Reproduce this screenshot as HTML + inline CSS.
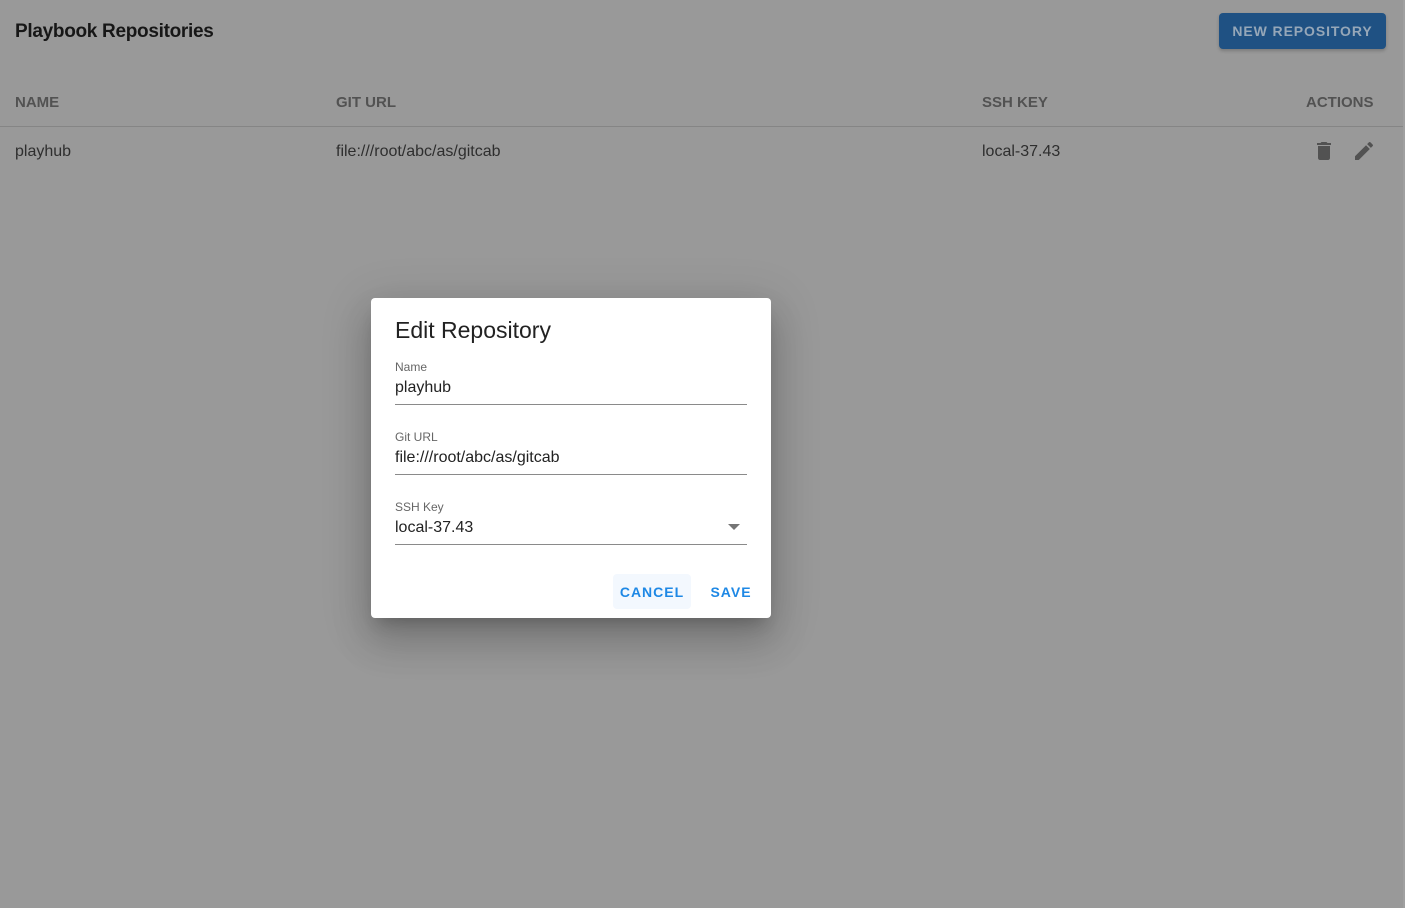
<!DOCTYPE html>
<html><head><meta charset="utf-8"><style>
*{box-sizing:border-box;margin:0;padding:0}
body{width:1405px;height:908px;background:#999;font-family:"Liberation Sans",Roboto,sans-serif;position:relative;overflow:hidden}
.strip{position:absolute;right:0;top:0;width:2px;height:908px;background:#a0a0a0}
h1{position:absolute;left:15px;top:21px;font-size:19px;font-weight:bold;color:#171717;letter-spacing:-0.3px}
.btn{position:absolute;left:1219px;top:13px;width:167px;height:36px;background:#1f5183;border-radius:4px;color:#96a7b8;font-size:14px;font-weight:bold;letter-spacing:0.9px;display:flex;align-items:center;justify-content:center;box-shadow:0 2px 3px rgba(0,0,0,.2)}
.th{position:absolute;top:94px;font-size:15px;font-weight:bold;color:#525252}
.td{position:absolute;top:143px;font-size:16px;color:#2e2e2e}
.line{position:absolute;left:0;top:126px;width:1403px;height:1px;background:#858585}
.dlg{position:absolute;left:371px;top:298px;width:400px;height:320px;background:#fff;border-radius:4px;box-shadow:0 11px 15px -7px rgba(0,0,0,.2),0 24px 38px 3px rgba(0,0,0,.14),0 9px 46px 8px rgba(0,0,0,.12)}
.dt{position:absolute;left:24px;top:19px;font-size:23px;color:#222}
.lab{position:absolute;left:24px;font-size:12px;color:#666}
.val{position:absolute;left:24px;font-size:16px;color:#222}
.ul{position:absolute;left:24px;width:352px;height:1px;background:#8a8a8a}
.ab{position:absolute;top:276px;height:35px;font-size:14px;font-weight:bold;color:#1e88e5;letter-spacing:1px;display:flex;align-items:center;justify-content:center;border-radius:4px}
</style></head><body>
<div class="strip"></div>
<h1>Playbook Repositories</h1>
<div class="btn">NEW REPOSITORY</div>
<div class="th" style="left:15px">NAME</div>
<div class="th" style="left:336px">GIT URL</div>
<div class="th" style="left:982px">SSH KEY</div>
<div class="th" style="left:1306px">ACTIONS</div>
<div class="line"></div>
<div class="td" style="left:15px">playhub</div>
<div class="td" style="left:336px">file:///root/abc/as/gitcab</div>
<div class="td" style="left:982px">local-37.43</div>
<svg style="position:absolute;left:1312px;top:139px" width="24" height="24" viewBox="0 0 24 24"><path fill="#525252" d="M6 19c0 1.1.9 2 2 2h8c1.1 0 2-.9 2-2V7H6v12zM19 4h-3.5l-1-1h-5l-1 1H5v2h14V4z"/></svg>
<svg style="position:absolute;left:1352px;top:139px" width="24" height="24" viewBox="0 0 24 24"><path fill="#525252" d="M3 17.25V21h3.75L17.81 9.94l-3.75-3.75L3 17.25zM20.71 7.04a1 1 0 000-1.41l-2.34-2.34a1 1 0 00-1.41 0l-1.83 1.83 3.75 3.75 1.83-1.83z"/></svg>
<div class="dlg">
<div class="dt">Edit Repository</div>
<div class="lab" style="top:62px">Name</div>
<div class="val" style="top:81px">playhub</div>
<div class="ul" style="top:106px"></div>
<div class="lab" style="top:132px">Git URL</div>
<div class="val" style="top:151px">file:///root/abc/as/gitcab</div>
<div class="ul" style="top:176px"></div>
<div class="lab" style="top:202px">SSH Key</div>
<div class="val" style="top:221px">local-37.43</div>
<svg style="position:absolute;left:357px;top:226px" width="12" height="6" viewBox="0 0 10 5"><path fill="#757575" d="M0 0l5 5 5-5z"/></svg>
<div class="ul" style="top:246px"></div>
<div class="ab" style="left:242px;width:78px;background:#f3f8fe">CANCEL</div>
<div class="ab" style="left:332px;width:56px">SAVE</div>
</div>
</body></html>
